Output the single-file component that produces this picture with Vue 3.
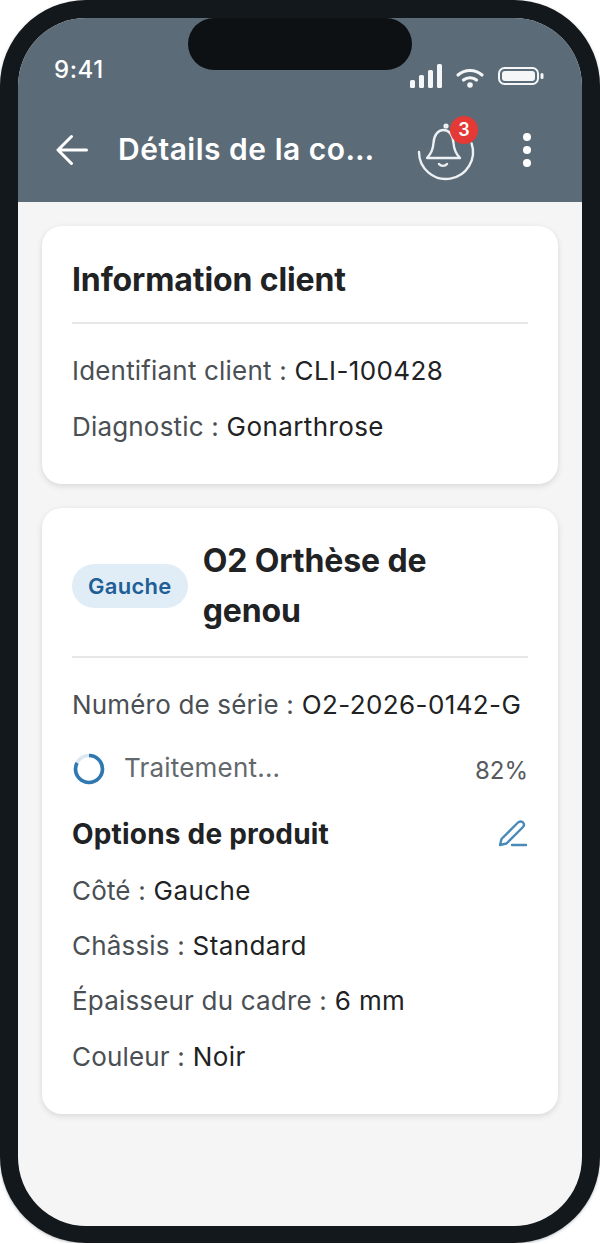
<script setup>
const clientRows = [
  { label: 'Identifiant client :', value: 'CLI-100428' },
  { label: 'Diagnostic :', value: 'Gonarthrose' },
]

const options = [
  { label: 'Côté :', value: 'Gauche' },
  { label: 'Châssis :', value: 'Standard' },
  { label: 'Épaisseur du cadre :', value: '6 mm' },
  { label: 'Couleur :', value: 'Noir' },
]
</script>

<template>
  <div class="phone">
    <div class="notch"></div>
    <div class="screen">
      <header class="top">
        <div class="status">
          <span class="time">9:41</span>
          <div class="status-icons">
            <svg width="32" height="24" viewBox="0 0 32 24" fill="#f4f6f7">
              <rect x="0" y="16" width="5" height="8" rx="1.5" />
              <rect x="9" y="11" width="5" height="13" rx="1.5" />
              <rect x="18" y="6" width="5" height="18" rx="1.5" />
              <rect x="27" y="0" width="5" height="24" rx="1.5" />
            </svg>
            <svg width="30" height="20" viewBox="0 0 30 20" fill="none" stroke="#f4f6f7" stroke-width="3.2" stroke-linecap="round">
              <path d="M3 7 C10 1 20 1 27 7" />
              <path d="M8.5 12 C12 9 18 9 21.5 12" />
              <circle cx="15" cy="17" r="2.8" fill="#f4f6f7" stroke="none" />
            </svg>
            <svg class="battery" width="46" height="20" viewBox="0 0 46 20" fill="none">
              <rect x="1" y="2" width="39" height="16" rx="5.5" stroke="#f4f6f7" stroke-width="2" />
              <rect x="4" y="5" width="33" height="10" rx="3" fill="#f4f6f7" />
              <rect x="42.5" y="7" width="3" height="6" rx="1.5" fill="#f4f6f7" />
            </svg>
          </div>
        </div>
        <div class="bar">
          <svg class="back" width="32" height="32" viewBox="0 0 32 32" fill="none" stroke="#fff" stroke-width="3" stroke-linecap="round" stroke-linejoin="round">
            <path d="M30.5 17 H2.5 M15.5 3.5 L2 17 L15.5 30.5" />
          </svg>
          <h1>Détails de la commande</h1>
          <div class="bell">
            <svg class="bell-icon" width="58" height="58" viewBox="0 0 58 58" fill="none" stroke="#eef1f3" stroke-width="2.4" stroke-linecap="round" stroke-linejoin="round">
              <path d="M53.6 23.4 A27 27 0 1 1 1 32" />
              <path d="M9 38 H42 C38 34 36 30 35.5 23 C35 15 31 10 25.5 10 C20 10 16 15 15.5 23 C15 30 13 34 9 38 Z" />
              <path d="M21 44 C23 46.5 27 46.5 29 44" />
              <circle cx="28" cy="6" r="1.4" />
            </svg>
            <span class="badge">3</span>
          </div>
          <div class="dots"><i></i><i></i><i></i></div>
        </div>
      </header>

      <main class="content">
        <section class="card client">
          <h2 class="card-title">Information client</h2>
          <div class="rows">
            <p v-for="r in clientRows" :key="r.label" class="row">
              <span>{{ r.label }}</span> {{ r.value }}
            </p>
          </div>
        </section>

        <section class="card product">
          <div class="product-head">
            <span class="tag">Gauche</span>
            <h2 class="card-title">O2 Orthèse de genou</h2>
          </div>
          <p class="row serial"><span>Numéro de série :</span> O2-2026-0142-G</p>
          <div class="progress">
            <svg width="34" height="34" viewBox="0 0 34 34" fill="none" stroke-width="3.6">
              <circle cx="17" cy="17" r="13.5" stroke="#dbe7f1" />
              <circle cx="17" cy="17" r="13.5" stroke="#2f79b0" stroke-dasharray="69.6 85" transform="rotate(-90 17 17)" />
            </svg>
            <span class="progress-label">Traitement...</span>
            <span class="percent">82%</span>
          </div>
          <div class="options-head">
            <h3>Options de produit</h3>
            <svg width="30" height="30" viewBox="0 0 30 30" fill="none" stroke="#4a8ab8" stroke-width="2.4" stroke-linecap="round" stroke-linejoin="round">
              <path d="M2 26 L3.5 20 L19.5 4 C21.5 2 24 2 25 3.5 C26.5 5 26 7 24.5 8.5 L8.5 24.5 Z" />
              <path d="M14 26 H28" />
            </svg>
          </div>
          <div class="options">
            <p v-for="o in options" :key="o.label" class="row">
              <span>{{ o.label }}</span> {{ o.value }}
            </p>
          </div>
        </section>
      </main>
    </div>
  </div>
</template>

<style>
html,
body {
  background: #fff;
}
</style>

<style scoped>
.phone {
  position: relative;
  width: 600px;
  height: 1243px;
  box-sizing: border-box;
  border: 18px solid #13181c;
  border-bottom-width: 17px;
  border-radius: 86px;
  background: #13181c;
  overflow: hidden;
  box-shadow: 0 1px 3px rgba(60, 70, 80, 0.35);
  font-family: Inter, 'Noto Sans', sans-serif;
  font-feature-settings: 'calt' 0;
  color: #202224;
}

.notch {
  position: absolute;
  top: 0;
  left: 170px;
  width: 224px;
  height: 52px;
  background: #0d1114;
  border-radius: 26px;
  z-index: 2;
}

.screen {
  height: 100%;
  background: #f5f5f6;
  border-radius: 64px;
  overflow: hidden;
}

.top {
  height: 184px;
  box-sizing: border-box;
  background: #5b6b78;
  color: #fff;
  padding: 0 38px;
}

.status {
  height: 100px;
  display: flex;
  justify-content: space-between;
  align-items: flex-start;
  padding-top: 38px;
  box-sizing: border-box;
}

.time {
  margin-top: 2px;
  margin-left: -2px;
  font-size: 24px;
  font-weight: 500;
  line-height: 24px;
  letter-spacing: 0.6px;
}

.status-icons {
  display: flex;
  align-items: flex-end;
  gap: 13px;
  margin-top: 8px;
}

.battery {
  margin-bottom: 2px;
}

.bar {
  display: flex;
  align-items: center;
  height: 62px;
}

.back {
  flex: none;
}

h1 {
  width: 262px;
  margin: 0 0 0 30px;
  font-size: 30px;
  font-weight: 600;
  letter-spacing: 0.5px;
  white-space: nowrap;
  overflow: hidden;
  text-overflow: ellipsis;
}

.bell {
  position: relative;
  width: 58px;
  height: 58px;
  margin-left: 38px;
  flex: none;
}

.bell-icon {
  overflow: visible;
}

.badge {
  position: absolute;
  top: -4px;
  left: 32px;
  width: 28px;
  height: 28px;
  border-radius: 50%;
  background: #e53935;
  color: #fff;
  font-size: 18px;
  font-weight: 600;
  line-height: 28px;
  text-align: center;
}

.dots {
  display: flex;
  flex-direction: column;
  gap: 5px;
  margin-left: 47px;
  margin-top: 2px;
}

.dots i {
  width: 8px;
  height: 8px;
  border-radius: 50%;
  background: #fff;
}

.content {
  display: flex;
  flex-direction: column;
  gap: 24px;
  padding: 24px;
}

.card {
  background: #fff;
  border-radius: 20px;
  padding: 30px;
  box-shadow: 0 2px 6px rgba(0, 0, 0, 0.12);
}

.client {
  height: 258px;
  box-sizing: border-box;
}

.card-title {
  margin: 0;
  font-size: 32px;
  font-weight: 700;
  line-height: 50px;
  letter-spacing: -0.12px;
}

.client .card-title {
  line-height: 48px;
  padding-bottom: 18px;
  border-bottom: 2px solid #e5e7e8;
}

.rows {
  display: flex;
  flex-direction: column;
  gap: 24px;
  margin-top: 31px;
}

.row {
  margin: 0;
  font-size: 26px;
  line-height: 32px;
  letter-spacing: 0.4px;
}

.row span {
  color: #4a4f54;
  letter-spacing: 0.18px;
}

.product {
  height: 606px;
  box-sizing: border-box;
}

.product-head {
  display: flex;
  align-items: center;
  gap: 15px;
  margin-top: -2px;
  padding-bottom: 20px;
  border-bottom: 2px solid #e5e7e8;
}

.tag {
  flex: none;
  background: #e1edf6;
  color: #1f5f96;
  font-size: 22px;
  font-weight: 600;
  line-height: 44px;
  letter-spacing: 0.3px;
  padding: 0 16px;
  border-radius: 22px;
}

.serial {
  margin-top: 31px;
}

.progress {
  display: flex;
  align-items: center;
  margin-top: 31px;
}

.progress-label {
  margin-left: 18px;
  margin-top: -4px;
  font-size: 26px;
  letter-spacing: 0.2px;
  color: #63686d;
}

.percent {
  margin-left: auto;
  margin-top: 2px;
  font-size: 24px;
  color: #55595e;
}

.options-head {
  display: flex;
  justify-content: space-between;
  align-items: center;
  margin-top: 30px;
}

h3 {
  margin: 0;
  font-size: 28px;
  font-weight: 700;
  line-height: 36px;
  letter-spacing: 0.2px;
}

.options {
  display: flex;
  flex-direction: column;
  gap: 23.2px;
  margin-top: 23px;
}
</style>
